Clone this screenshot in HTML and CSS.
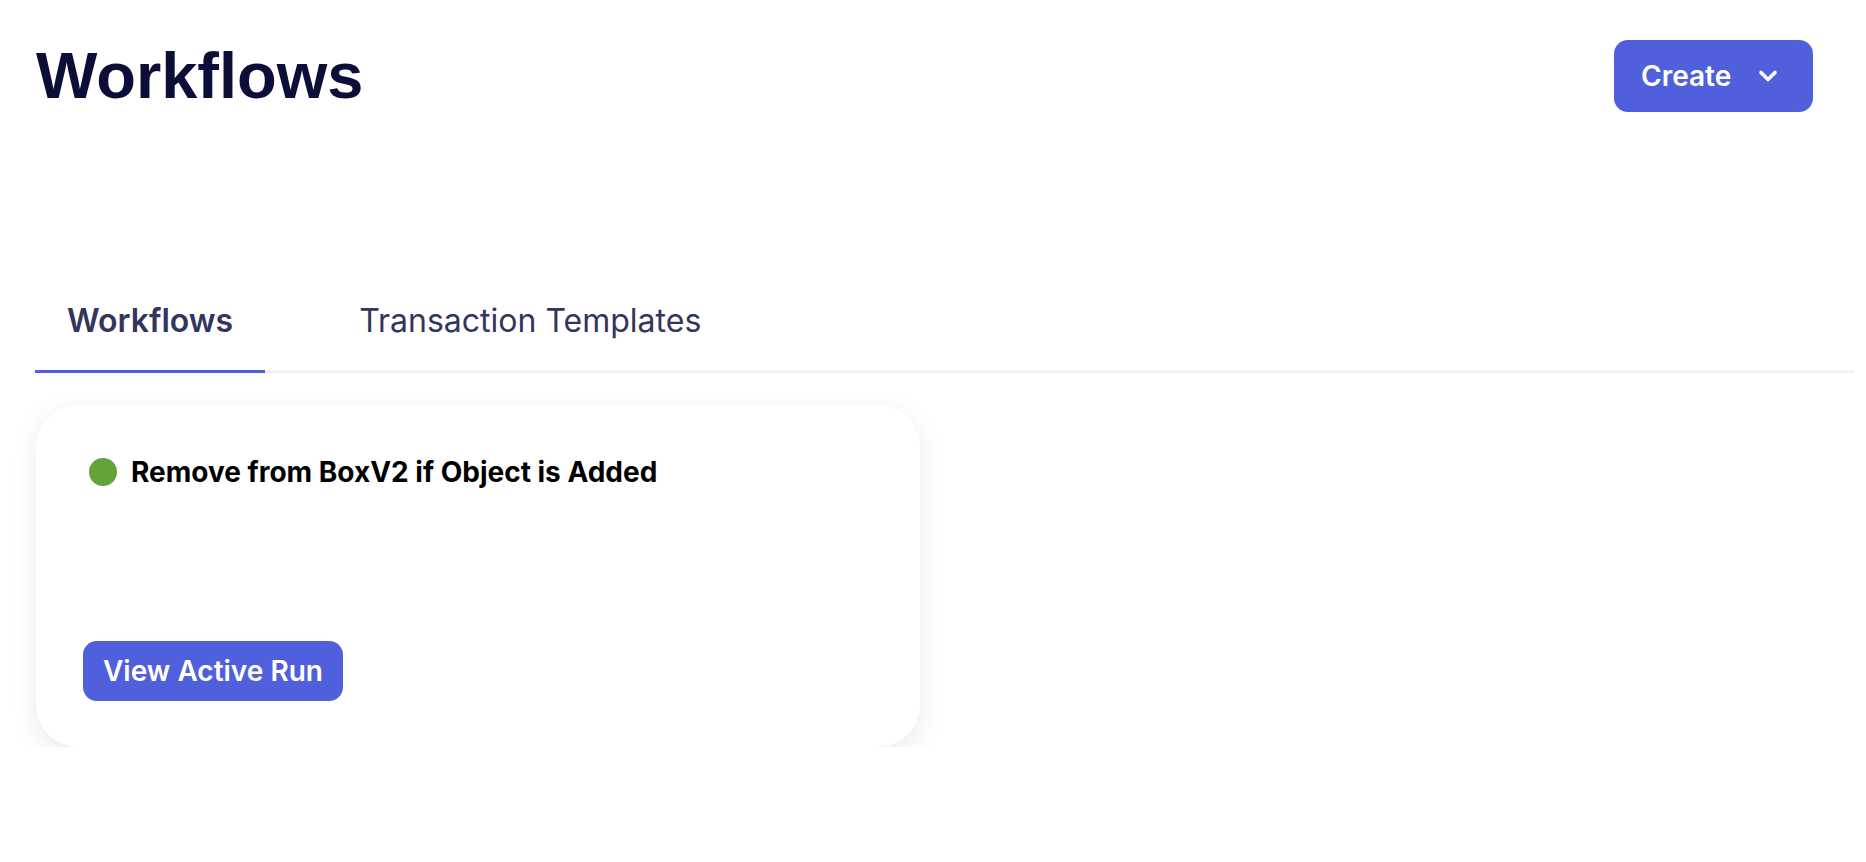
FILE: index.html
```html
<!DOCTYPE html>
<html lang="en">
<head>
<meta charset="utf-8">
<title>Workflows</title>
<link rel="stylesheet" href="styles.css">
</head>
<body>
<div class="page">
  <header class="header">
    <h1 class="title">Workflows</h1>
    <button class="btn btn-create">
      <span>Create</span>
      <svg class="chev" width="20" height="14" viewBox="0 0 20 14" fill="none"><path d="M3 3.5 L10 10.5 L17 3.5" stroke="#fff" stroke-width="3.6" stroke-linecap="round" stroke-linejoin="round"/></svg>
    </button>
  </header>
  <nav class="tabs">
    <div class="tab tab-active">Workflows</div>
    <div class="tab">Transaction Templates</div>
  </nav>
  <section class="cards">
    <div class="card">
      <div class="card-title-row">
        <span class="dot"></span>
        <span class="card-title">Remove from BoxV2 if Object is Added</span>
      </div>
      <button class="btn btn-run">View Active Run</button>
    </div>
  </section>
</div>
</body>
</html>
```
FILE: styles.css
```css
* { box-sizing: border-box; }
html, body { margin: 0; padding: 0; background: #fff; }
body { font-family: Inter, "Noto Sans", sans-serif; }
.page { padding: 0 12px 0 35px; }
.header {
  display: flex;
  align-items: center;
  justify-content: space-between;
  padding-top: 40px;
  padding-right: 41px;
}
.title {
  margin: 0 0 0 1px;
  font-family: "Liberation Sans", Arial, sans-serif;
  font-weight: 700;
  font-size: 65px;
  line-height: 72px;
  color: #0b0f38;
}
.btn {
  border: none;
  background: #5060dc;
  color: #fff;
  font-family: Inter, sans-serif;
  font-weight: 600;
  cursor: pointer;
}
.btn-create {
  display: flex;
  align-items: center;
  justify-content: space-between;
  height: 72px;
  width: 199px;
  padding: 0 35px 0 27px;
  border-radius: 14px;
  font-size: 28px;
}
.chev { display: block; }
.tabs {
  display: flex;
  gap: 62px;
  margin-top: 189px;
  border-bottom: 3px solid #f1f1f6;
}
.tab {
  padding: 0 32px 29px;
  font-size: 32px;
  line-height: 40px;
  color: #32365e;
  font-weight: 400;
  margin-bottom: -3px;
  border-bottom: 3px solid transparent;
}
.tab-active {
  font-weight: 600;
  border-bottom-color: #5060dc;
}
.cards { padding-top: 32px; }
.card {
  margin-left: 1px;
  width: 884px;
  height: 342px;
  border-radius: 42px;
  background: #fff;
  box-shadow: 0 8px 26px rgba(30, 30, 70, 0.09);
  padding: 51px 47px 46px;
  display: flex;
  flex-direction: column;
  align-items: flex-start;
}
.card-title-row {
  display: flex;
  align-items: center;
  gap: 14px;
  padding-left: 6px;
}
.dot {
  width: 28px;
  height: 28px;
  border-radius: 50%;
  background: #62a33a;
  flex: none;
}
.card-title {
  font-size: 28px;
  line-height: 32px;
  font-weight: 700;
  color: #000;
}
.btn-run {
  margin-top: auto;
  height: 60px;
  padding: 0 20px;
  border-radius: 14px;
  font-size: 28px;
}
```
